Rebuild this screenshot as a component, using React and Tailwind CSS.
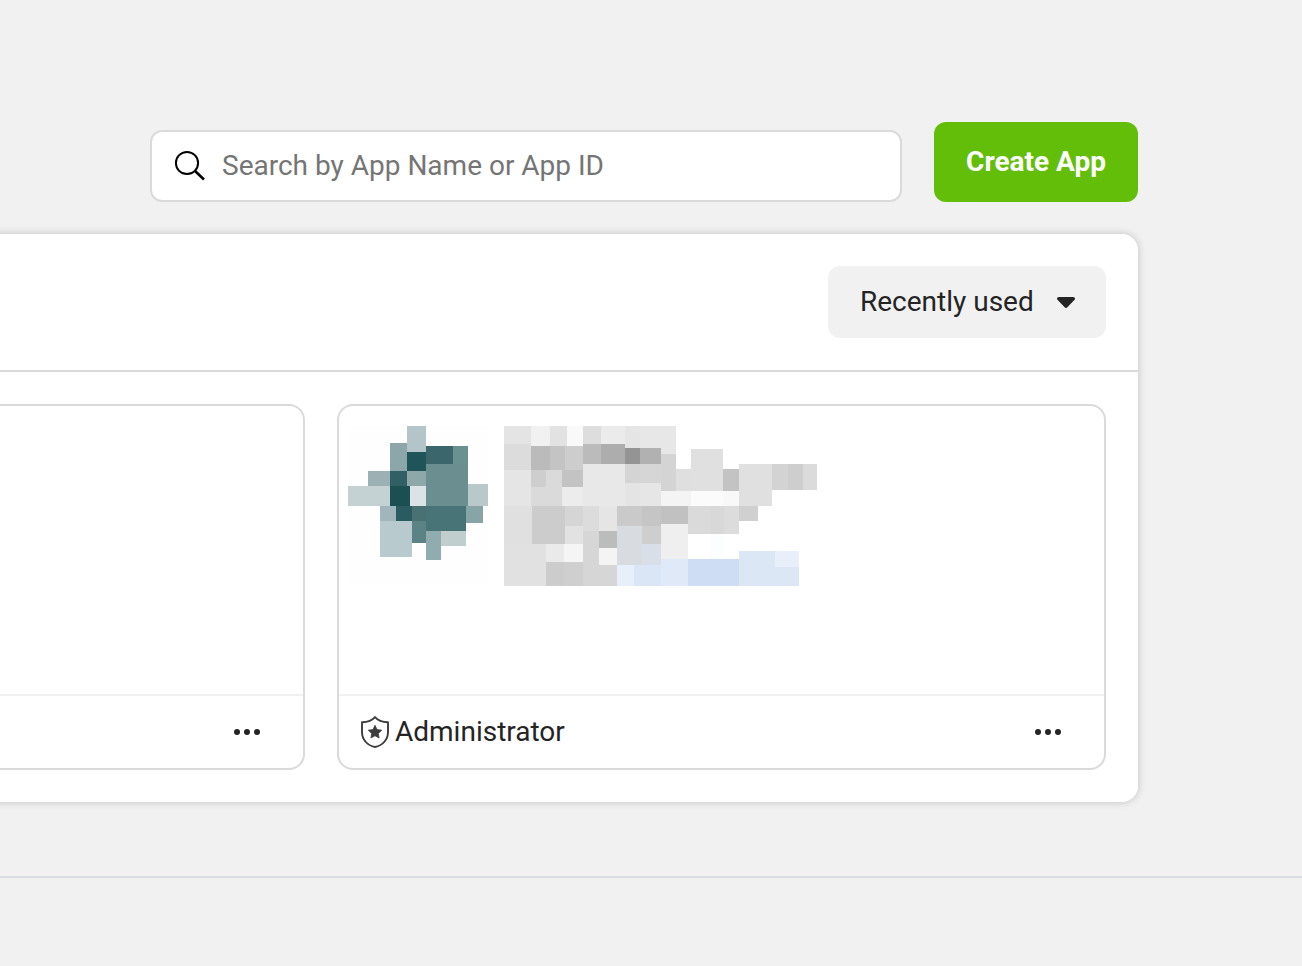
const LOGO_TILES = [
  [348, 426, 140, 158, '#fefefe'],
  [407, 426, 19, 26, '#b4c5c9'],
  [390, 443, 17, 28, '#8ca6a9'],
  [407, 452, 19, 19, '#1f5558'],
  [426, 446, 27, 18, '#3b666b'],
  [453, 446, 15, 18, '#6a9190'],
  [368, 471, 22, 15, '#9bb1b4'],
  [390, 471, 17, 15, '#305f66'],
  [407, 471, 19, 15, '#8ea8aa'],
  [426, 464, 42, 42, '#6b8e90'],
  [348, 486, 42, 20, '#c5d2d4'],
  [390, 486, 20, 20, '#1b4f52'],
  [410, 486, 16, 20, '#dbe3e6'],
  [468, 484, 20, 22, '#b9c9c9'],
  [380, 506, 16, 15, '#a1b5bd'],
  [396, 506, 16, 15, '#2a5b60'],
  [412, 506, 14, 15, '#497174'],
  [426, 506, 40, 25, '#487478'],
  [466, 506, 17, 17, '#87a4a7'],
  [380, 521, 32, 36, '#b9cace'],
  [412, 521, 14, 22, '#5b8284'],
  [426, 531, 15, 29, '#91acae'],
  [441, 531, 25, 15, '#c0cece'],
];

const NAME_TILES = [
  [504, 426, 27, 18, '#e4e4e4'],
  [531, 426, 19, 20, '#f1f1f1'],
  [550, 426, 17, 20, '#e2e2e2'],
  [567, 426, 16, 20, '#f9f9f9'],
  [583, 426, 18, 18, '#dddddd'],
  [601, 426, 24, 18, '#ebebeb'],
  [625, 426, 15, 22, '#e5e5e5'],
  [640, 426, 36, 28, '#e7e7e7'],
  [504, 444, 27, 26, '#dcdcdc'],
  [531, 446, 19, 24, '#bbbbbb'],
  [550, 446, 15, 24, '#c4c4c4'],
  [565, 446, 18, 24, '#cdcdcd'],
  [583, 444, 18, 20, '#bbbbbb'],
  [601, 444, 24, 20, '#adadad'],
  [625, 448, 15, 16, '#949494'],
  [640, 448, 21, 16, '#b1b1b1'],
  [661, 454, 15, 37, '#d4d4d4'],
  [504, 470, 27, 36, '#e5e5e5'],
  [531, 470, 15, 17, '#cecece'],
  [546, 470, 16, 36, '#dadada'],
  [562, 470, 21, 17, '#c3c3c3'],
  [531, 487, 31, 19, '#dadada'],
  [562, 487, 21, 19, '#ececec'],
  [583, 464, 42, 42, '#e8e8e8'],
  [625, 464, 15, 19, '#d4d4d4'],
  [640, 464, 21, 19, '#d6d6d6'],
  [625, 483, 15, 23, '#e4e4e4'],
  [640, 483, 21, 23, '#e6e6e6'],
  [504, 506, 28, 38, '#e0e0e0'],
  [532, 506, 33, 38, '#cccccc'],
  [565, 506, 18, 20, '#d5d5d5'],
  [565, 526, 18, 18, '#e2e2e2'],
  [583, 506, 16, 25, '#dcdcdc'],
  [599, 506, 18, 25, '#e5e5e5'],
  [617, 506, 25, 20, '#cacaca'],
  [642, 506, 19, 20, '#c5c5c5'],
  [504, 544, 42, 42, '#e1e1e1'],
  [546, 544, 18, 18, '#eaeaea'],
  [564, 544, 19, 18, '#f5f5f5'],
  [546, 562, 18, 24, '#cccccc'],
  [564, 562, 19, 24, '#cfcfcf'],
  [583, 531, 16, 55, '#d6d6d6'],
  [599, 531, 18, 17, '#babdbc'],
  [599, 548, 18, 17, '#f4f4f4'],
  [599, 565, 18, 21, '#d6d6d6'],
  [617, 526, 25, 39, '#d8dbe0'],
  [642, 526, 19, 18, '#cecece'],
  [642, 544, 19, 21, '#d8dfe9'],
  [617, 565, 17, 21, '#e7effa'],
  [634, 565, 27, 21, '#dae5f6'],
  [676, 469, 15, 22, '#dfdfdf'],
  [691, 449, 32, 42, '#e0e0e0'],
  [723, 469, 16, 22, '#c3c3c3'],
  [739, 464, 33, 42, '#e0e0e0'],
  [772, 464, 16, 26, '#d3d3d3'],
  [788, 464, 15, 26, '#cecece'],
  [803, 464, 14, 26, '#dbdbdb'],
  [661, 491, 30, 15, '#f4f4f4'],
  [691, 491, 32, 15, '#fbfbfb'],
  [723, 491, 16, 15, '#f8f8f8'],
  [661, 506, 27, 18, '#c1c1c1'],
  [688, 506, 22, 28, '#dadada'],
  [710, 506, 14, 28, '#d8d8d8'],
  [724, 506, 15, 28, '#dcdcdc'],
  [739, 506, 19, 15, '#d0d0d0'],
  [661, 524, 27, 35, '#efefef'],
  [710, 534, 14, 25, '#fbfdff'],
  [661, 559, 27, 27, '#e0e9f8'],
  [688, 559, 51, 27, '#cfddf4'],
  [739, 551, 60, 35, '#dbe7f5'],
  [775, 551, 24, 16, '#e8effa'],
];

function Mosaic({ tiles, viewBox, className }) {
  return (
    <svg viewBox={viewBox} className={className} shapeRendering="crispEdges" aria-hidden="true">
      {tiles.map(([x, y, w, h, fill], i) => (
        <rect key={i} x={x} y={y} width={w} height={h} fill={fill} />
      ))}
    </svg>
  );
}

function MoreButton() {
  return (
    <button className="flex gap-1">
      <span className="size-1.5 rounded-full bg-[#242424]" />
      <span className="size-1.5 rounded-full bg-[#242424]" />
      <span className="size-1.5 rounded-full bg-[#242424]" />
    </button>
  );
}

function ShieldIcon() {
  return (
    <svg viewBox="0 0 28 32" className="h-8 w-7 shrink-0" fill="none">
      <path
        d="M14 1.100C11.500 4 6.500 6 1 6.300V16c0 7.500 5.200 13.500 13 15 7.800-1.500 13-7.500 13-15V6.300C21.500 6 16.500 4 14 1.100Z"
        stroke="#3c3c3c"
        strokeWidth="1.900"
        strokeLinejoin="round"
      />
      <path
        d="M14 9.300l2 4.300 4.700.6-3.400 3.200.8 4.600-4.100-2.300-4.100 2.300.8-4.600-3.400-3.200 4.700-.6L14 9.300Z"
        fill="#3c3c3c"
        stroke="#3c3c3c"
        strokeWidth="0.800"
        strokeLinejoin="round"
      />
    </svg>
  );
}

export default function App() {
  return (
    <div className="flex h-[966px] w-[1302px] flex-col overflow-hidden bg-[#f1f1f1] font-['Roboto',sans-serif] text-[28px] leading-8 text-[#242424]">
      <div className="mt-[122px] flex h-20 items-end gap-8 pl-[150px]">
        <label className="flex h-[72px] w-[752px] items-center rounded-xl border-2 border-[#dadada] bg-white pl-[22px]">
          <svg viewBox="0 0 32 32" className="size-8 shrink-0" fill="none" stroke="#000">
            <circle cx="13" cy="13" r="11.100" strokeWidth="2" />
            <path d="M20.800 20.800l9.200 8.700" strokeWidth="2.600" />
          </svg>
          <span className="ml-4 text-[#757575]">Search by App Name or App ID</span>
        </label>
        <button className="flex h-20 w-[204px] items-center justify-center rounded-xl bg-[#63be09] font-bold text-white">
          Create App
        </button>
      </div>

      <main className="-ml-8 mt-8 flex h-[568px] w-[1170px] shrink-0 flex-col rounded-r-2xl bg-white shadow-[0_0_8px_rgba(0,0,0,0.2)]">
        <div className="flex h-[138px] items-center justify-end border-b-2 border-[#dadada] pr-8">
          <button className="flex h-[72px] w-[278px] items-center rounded-xl bg-[#f1f1f1] pl-8">
            <span>Recently used</span>
            <svg viewBox="0 0 18 11" className="ml-auto mr-[31px] h-[11px] w-[18px]" fill="#242424">
              <path d="M2 0h14c2 0 2.600 1.900 1.300 3.100l-6.900 7.200c-.8.9-2 .9-2.800 0L.7 3.100C-.6 1.900 0 0 2 0Z" />
            </svg>
          </button>
        </div>

        <div className="flex gap-8 py-8 pr-8">
          <article className="flex h-[366px] w-[337px] flex-col rounded-r-2xl border-2 border-l-0 border-[#dadada]">
            <div className="h-[288px]" />
            <div className="flex flex-1 items-center justify-end border-t-2 border-[#f1f1f1] pr-[43px]">
              <MoreButton />
            </div>
          </article>

          <article className="flex h-[366px] w-[769px] flex-col rounded-2xl border-2 border-[#dadada]">
            <div className="flex h-[288px] items-start gap-4 pl-[9px] pt-5">
              <Mosaic tiles={LOGO_TILES} viewBox="348 426 140 160" className="h-40 w-[140px]" />
              <Mosaic tiles={NAME_TILES} viewBox="504 426 313 160" className="h-40 w-[313px]" />
            </div>
            <div className="flex flex-1 items-center border-t-2 border-[#f1f1f1] pl-[22px] pr-[43px]">
              <ShieldIcon />
              <span className="ml-1.5 flex-1">Administrator</span>
              <MoreButton />
            </div>
          </article>
        </div>
      </main>

      <hr className="mt-[74px] border-t-2 border-[#dadde1]" />
    </div>
  );
}
